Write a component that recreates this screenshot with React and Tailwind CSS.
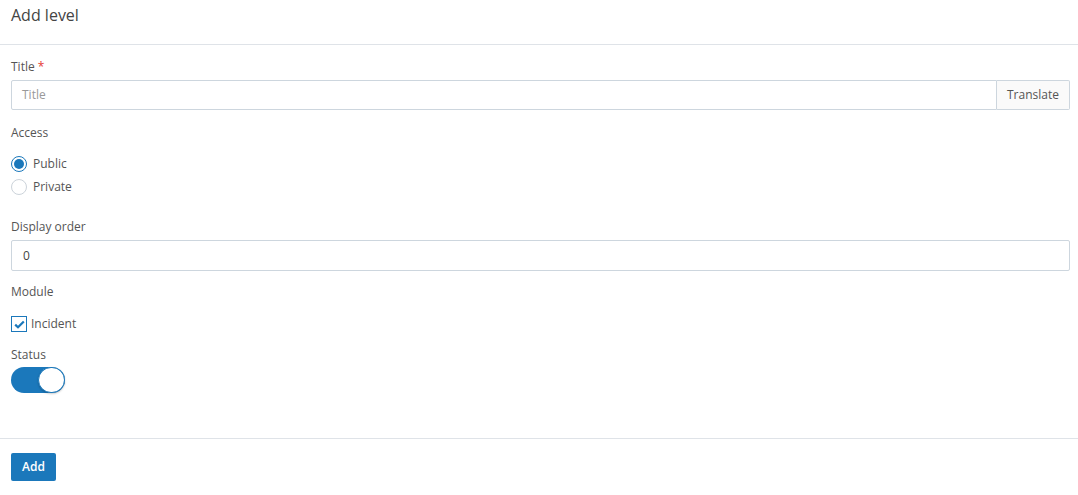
export default function App() {
  return (
    <div className="w-[1078px] h-[495px] bg-white text-[#555] overflow-hidden" style={{ fontFamily: '"Open Sans", "Noto Sans", sans-serif' }}>
      <div className="h-[45px] border-b border-[#dfe3e8] px-[11px] pt-[3px]">
        <div className="text-[16px] leading-[24px] text-[#444]">Add level</div>
      </div>
      <div className="pl-[11px] pr-[8px] pt-[13px] h-[394px] border-b border-[#dfe3e8]">
        <div className="text-[12px] leading-[18px]">Title <span className="text-[#e53935]">*</span></div>
        <div className="mt-[4px] flex h-[30px]">
          <div className="flex-1 border border-[#cdd6de] rounded-l-[2px] flex items-center px-[10px] text-[12px] text-[#999]">Title</div>
          <div className="w-[73px] border border-l-0 border-[#cdd6de] bg-[#fafafa] rounded-r-[2px] flex items-center justify-center text-[12px] text-[#555]">Translate</div>
        </div>
        <div className="mt-[14px] text-[12px] leading-[18px]">Access</div>
        <div className="mt-[13px] flex items-center h-[18px] gap-[6px] text-[12px]">
          <div className="w-[16px] h-[16px] rounded-full border-[1.5px] border-[#1b78bb] flex items-center justify-center">
            <div className="w-[10px] h-[10px] rounded-full bg-[#1b78bb]"></div>
          </div>
          <span>Public</span>
        </div>
        <div className="mt-[5px] flex items-center h-[18px] gap-[6px] text-[12px]">
          <div className="w-[16px] h-[16px] rounded-full border border-[#ccd3da]"></div>
          <span>Private</span>
        </div>
        <div className="mt-[22px] text-[12px] leading-[18px]">Display order</div>
        <div className="mt-[4px] h-[31px] border border-[#cdd6de] rounded-[2px] flex items-center px-[11px] text-[12px] text-[#444]">0</div>
        <div className="mt-[12px] text-[12px] leading-[18px]">Module</div>
        <div className="mt-[15px] flex items-center gap-[4px] text-[12px] h-[16px]">
          <div className="w-[16px] h-[16px] border border-[#1b78bb] flex items-center justify-center">
            <svg width="11" height="9" viewBox="0 0 11 9"><path d="M1.2 4.6 L4 7.3 L9.8 1.4" fill="none" stroke="#1b78bb" strokeWidth="2.2" /></svg>
          </div>
          <span>Incident</span>
        </div>
        <div className="mt-[14px] text-[12px] leading-[18px]">Status</div>
        <div className="mt-[3px] w-[54px] h-[26px] rounded-full bg-[#1b78bb] flex items-center justify-end">
          <div className="w-[27px] h-[26px] rounded-full bg-white border border-[#1b78bb] shadow-[0_1px_2px_rgba(0,0,0,0.2)]"></div>
        </div>
      </div>
      <div className="px-[11px] pt-[14px]">
        <button className="w-[45px] h-[28px] bg-[#1b78bb] rounded-[2px] text-white text-[12px] font-semibold">Add</button>
      </div>
    </div>
  );
}
